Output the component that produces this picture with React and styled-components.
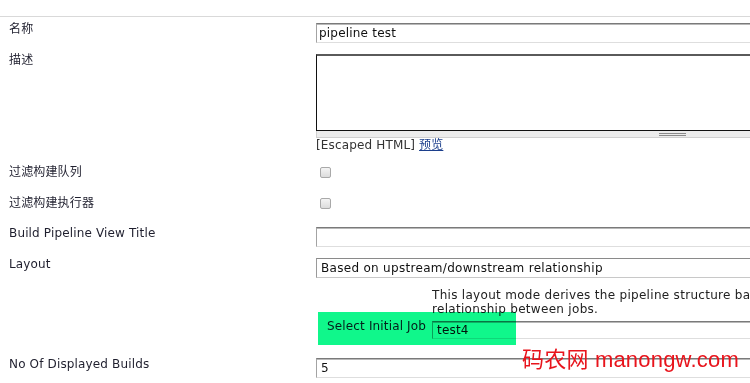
import React from 'react';
import styled, { createGlobalStyle } from 'styled-components';

const GlobalStyle = createGlobalStyle`
  html, body {
    margin: 0;
    padding: 0;
    background: #fff;
    overflow: hidden;
  }
  body {
    font-family: "DejaVu Sans", Verdana, "Noto Sans CJK SC", sans-serif;
    font-size: 12px;
    letter-spacing: 0.15px;
    color: #222;
  }
`;

const Page = styled.div`
  position: relative;
  width: 1040px;
  height: 383px;
`;

const TopBar = styled.div`
  height: 16px;
  border-bottom: 1px solid #d9d9d9;
`;

const Form = styled.div`
  display: flex;
  flex-direction: column;
`;

const Row = styled.div`
  display: grid;
  grid-template-columns: 307px 712px;
  padding: 5px 0 0 9px;
  height: ${(props) => props.h}px;
  box-sizing: border-box;
`;

const Label = styled.div`
  line-height: 15px;
  color: #1f1f2e;
  white-space: nowrap;
`;

const Field = styled.div`
  margin-top: 1px;
  display: flex;
  flex-direction: column;
`;

const TextInput = styled.input`
  box-sizing: border-box;
  width: 100%;
  height: ${(props) => props.h || 20}px;
  margin: 0;
  padding: 0 ${(props) => props.pad || 2}px;
  font: inherit;
  font-size: 12px;
  letter-spacing: 0.2px;
  color: #111;
  background: #fff;
  border: 1px solid;
  border-color: #7a7a7a #cfcfcf #dedede #a3a3a3;
  box-shadow: inset 0 1px 0 #b8b8b8;
  outline: none;
`;

const TextArea = styled.textarea`
  box-sizing: border-box;
  display: block;
  width: 100%;
  height: 77px;
  margin: 0;
  resize: none;
  border: 1px solid #111;
  border-top: 2px solid #5a5a5a;
  outline: none;
`;

const Resizer = styled.div`
  height: 7px;
  box-sizing: border-box;
  background: #ececec;
  border: 1px solid #d0d0d0;
  border-top: none;
  display: flex;
  justify-content: center;
  align-items: center;
`;

const Grip = styled.div`
  width: 27px;
  height: 3px;
  border-top: 1px solid #8a8a8a;
  border-bottom: 1px solid #8a8a8a;
  box-sizing: border-box;
`;

const Hint = styled.div`
  line-height: 15px;
  color: #333;
  white-space: nowrap;
`;

const Link = styled.a`
  color: #1c3f8c;
  text-decoration: underline;
`;

const Check = styled.span`
  display: block;
  width: 11px;
  height: 11px;
  margin: 1px 0 0 4px;
  box-sizing: border-box;
  border: 1px solid #a9a9a9;
  border-radius: 2px;
  background: linear-gradient(#f4f4f4, #dcdcdc);
`;

const Select = styled.select`
  appearance: none;
  box-sizing: border-box;
  width: 100%;
  height: 20px;
  margin: 0;
  padding: 0 4px;
  font: inherit;
  font-size: 12px;
  letter-spacing: 0.3px;
  color: #111;
  background: #fff;
  border: 1px solid;
  border-color: #8a8a8a #c8c8c8 #c8c8c8 #9a9a9a;
  border-radius: 0;
  outline: none;
`;

const Desc = styled.div`
  margin: 10px 0 0 116px;
  line-height: 14px;
  letter-spacing: 0.3px;
  color: #222;
  white-space: nowrap;
`;

const JobRow = styled.div`
  position: relative;
  display: grid;
  grid-template-columns: 116px 1fr;
  margin-top: 3px;
`;

const JobLabel = styled.div`
  padding-left: 11px;
  line-height: 15px;
  color: #1f1f2e;
  white-space: nowrap;
`;

const JobField = styled.div`
  padding-top: 2px;
`;

const Highlight = styled.div`
  position: absolute;
  left: 2px;
  top: -7px;
  width: 198px;
  height: 33px;
  background: #10f78b;
  mix-blend-mode: multiply;
  pointer-events: none;
`;

const Watermark = styled.div`
  position: absolute;
  left: 522px;
  top: 349px;
  font-family: "Liberation Sans", Arial, "Noto Sans CJK SC", sans-serif;
  font-size: 22px;
  line-height: 22px;
  letter-spacing: 0.2px;
  color: #e8141c;
  white-space: nowrap;
`;

const App = () => {
  return (
    <Page>
      <GlobalStyle />
      <TopBar />
      <Form>
        <Row h={31}>
          <Label>名称</Label>
          <Field>
            <TextInput defaultValue="pipeline test" />
          </Field>
        </Row>
        <Row h={112}>
          <Label>描述</Label>
          <Field>
            <TextArea />
            <Resizer><Grip /></Resizer>
            <Hint>[Escaped HTML] <Link>预览</Link></Hint>
          </Field>
        </Row>
        <Row h={31}>
          <Label>过滤构建队列</Label>
          <Field><Check /></Field>
        </Row>
        <Row h={30}>
          <Label>过滤构建执行器</Label>
          <Field><Check /></Field>
        </Row>
        <Row h={31}>
          <Label>Build Pipeline View Title</Label>
          <Field>
            <TextInput />
          </Field>
        </Row>
        <Row h={100}>
          <Label>Layout</Label>
          <Field>
            <Select defaultValue="ud">
              <option value="ud">Based on upstream/downstream relationship</option>
            </Select>
            <Desc>
              This layout mode derives the pipeline structure based on the upstream/downstream
              <br />
              relationship between jobs.
            </Desc>
            <JobRow>
              <JobLabel>Select Initial Job</JobLabel>
              <JobField>
                <TextInput h={18} pad={4} defaultValue="test4" />
              </JobField>
              <Highlight />
            </JobRow>
          </Field>
        </Row>
        <Row h={31}>
          <Label>No Of Displayed Builds</Label>
          <Field>
            <TextInput pad={4} defaultValue="5" />
          </Field>
        </Row>
      </Form>
      <Watermark>码农网 manongw.com</Watermark>
    </Page>
  );
};

export default App;
